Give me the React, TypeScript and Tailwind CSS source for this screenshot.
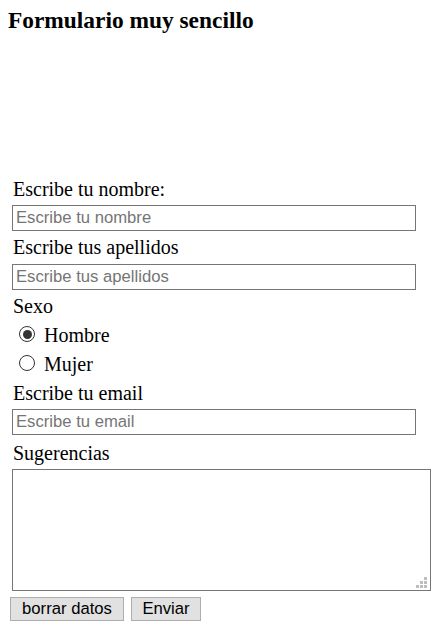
import React from 'react';

const serif = "font-['Liberation_Serif','Times_New_Roman',serif]";
const sans = "font-['Liberation_Sans',Arial,sans-serif]";

function TextField({ placeholder, className }: { placeholder: string; className?: string }) {
  return (
    <input
      type="text"
      placeholder={placeholder}
      className={`block w-[404px] h-[26px] border border-[#767676] bg-white px-[3px] text-[16.67px] text-black placeholder:text-[#757575] outline-none ${sans} ${className ?? ''}`}
    />
  );
}

function Radio({ label, checked }: { label: string; checked?: boolean }) {
  return (
    <label className="flex h-[23px] items-start">
      <span className="ml-[7px] mt-[2px] flex h-[16px] w-[16px] items-center justify-center rounded-full border border-[#333333] bg-white">
        {checked && <span className="h-[9px] w-[9px] rounded-full bg-[#333333]" />}
      </span>
      <span className="ml-[9px] leading-[23px]">{label}</span>
    </label>
  );
}

export default function App() {
  return (
    <div className={`min-h-[629px] w-[439px] bg-white text-black ${serif}`}>
      <h3 className="ml-[8px] pt-[7px] text-[23.4px] font-bold leading-[27px]">Formulario muy sencillo</h3>

      <form className="flex flex-col pl-[12px] text-[20px] leading-[23px]">
        <label className="ml-[1px] mt-[144px] h-[23px]">Escribe tu nombre:</label>
        <TextField placeholder="Escribe tu nombre" className="mt-[4px]" />

        <label className="ml-[1px] mt-[5px] h-[23px]">Escribe tus apellidos</label>
        <TextField placeholder="Escribe tus apellidos" className="mt-[5px]" />

        <span className="ml-[1px] mt-[5px] h-[23px]">Sexo</span>
        <div className="mt-[6px]">
          <Radio label="Hombre" checked />
        </div>
        <div className="mt-[6px]">
          <Radio label="Mujer" />
        </div>

        <label className="ml-[1px] mt-[6px] h-[23px]">Escribe tu email</label>
        <TextField placeholder="Escribe tu email" className="mt-[4px]" />

        <label className="ml-[1px] mt-[7px] h-[23px]">Sugerencias</label>
        <div className="relative mt-[4px] h-[122px] w-[419px] border border-[#767676] bg-white">
          {/* resize grip */}
          <svg className="absolute bottom-[2px] right-[3px]" width="11" height="11" viewBox="0 0 11 11">
            <rect x="8" y="0" width="3" height="3" fill="#bdbdbd" />
            <rect x="4" y="4" width="3" height="3" fill="#bdbdbd" />
            <rect x="8" y="4" width="3" height="3" fill="#bdbdbd" />
            <rect x="0" y="8" width="3" height="3" fill="#bdbdbd" />
            <rect x="4" y="8" width="3" height="3" fill="#bdbdbd" />
            <rect x="8" y="8" width="3" height="3" fill="#bdbdbd" />
          </svg>
        </div>

        <div className={`-ml-[2px] mt-[6px] flex gap-[7px] ${sans} text-[16.67px]`}>
          <button type="reset" className="h-[24px] w-[114px] border border-[#adadad] bg-[#e1e1e1] leading-[22px] text-black">
            borrar datos
          </button>
          <button type="submit" className="h-[24px] w-[70px] border border-[#adadad] bg-[#e1e1e1] leading-[22px] text-black">
            Enviar
          </button>
        </div>
      </form>
    </div>
  );
}
